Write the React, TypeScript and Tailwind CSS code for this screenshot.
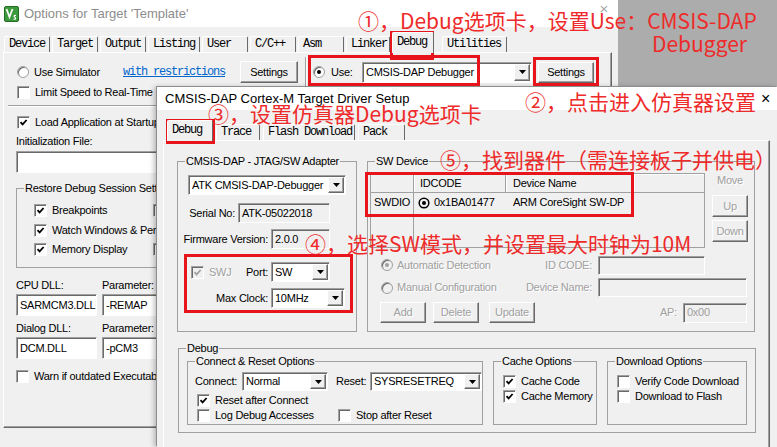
import React from "react";

const sunken =
  "border border-t-[#a0a0a0] border-l-[#a0a0a0] border-r-white border-b-white shadow-[inset_1px_1px_0_#696969]";
const raised =
  "border border-t-white border-l-white border-r-[#696969] border-b-[#696969] shadow-[inset_-1px_-1px_0_#a0a0a0]";
const grayText = "text-[#a0a0a0] [text-shadow:1px_1px_0_#fff]";
const redBox = "border-[3px] border-[#e8141c]";
const ann =
  "font-['Noto_Sans_CJK_SC',sans-serif] text-[21px] leading-[23px] tracking-normal text-[#ee2a2a] whitespace-nowrap";
const mono = "font-['Liberation_Mono',monospace] text-[12px] tracking-[-1.2px]";

function Radio({ on, dis, cls = "" }: { on?: boolean; dis?: boolean; cls?: string }) {
  return (
    <span
      className={`w-[12px] h-[12px] shrink-0 rounded-full border border-[#a0a0a0] shadow-[inset_1px_1px_0_#696969] flex items-center justify-center ${
        dis ? "bg-[#f0f0f0]" : "bg-white"
      } ${cls}`}
    >
      {on && <span className={`w-[4px] h-[4px] rounded-full ${dis ? "bg-[#a0a0a0]" : "bg-black"}`} />}
    </span>
  );
}

function Check({ on, dis, label, cls = "" }: { on?: boolean; dis?: boolean; label?: string; cls?: string }) {
  return (
    <div className={`flex items-center gap-[5px] h-[14px] whitespace-nowrap shrink-0 ${cls}`}>
      <span
        className={`w-[13px] h-[13px] shrink-0 ${sunken} ${dis ? "bg-[#f0f0f0]" : "bg-white"} flex items-center justify-center`}
      >
        {on && (
          <svg width="9" height="9" viewBox="0 0 9 9">
            <path d="M1.5 4.2L3.6 6.4L7.6 2" fill="none" stroke={dis ? "#a0a0a0" : "#000"} strokeWidth="1.8" />
          </svg>
        )}
      </span>
      {label && <span className={dis ? grayText : ""}>{label}</span>}
    </div>
  );
}

function Btn({ label, cls, dis }: { label: string; cls: string; dis?: boolean }) {
  return (
    <div className={`${cls} shrink-0 ${raised} bg-[#f0f0f0] flex items-center justify-center ${dis ? grayText : ""}`}>
      {label}
    </div>
  );
}

function Field({ text = "", cls, gray, dim }: { text?: string; cls: string; gray?: boolean; dim?: boolean }) {
  return (
    <div
      className={`${cls} shrink-0 ${sunken} ${gray ? "bg-[#f0f0f0]" : "bg-white"} flex items-center pl-[3px] whitespace-nowrap overflow-hidden ${
        dim ? "text-[#a0a0a0]" : ""
      }`}
    >
      {text}
    </div>
  );
}

function Combo({ text, cls }: { text: string; cls: string }) {
  return (
    <div className={`${cls} shrink-0 ${sunken} bg-white flex items-stretch`}>
      <span className="flex-1 flex items-center pl-[3px] whitespace-nowrap overflow-hidden">{text}</span>
      <span className={`w-[16px] my-[1px] mr-[1px] bg-[#f0f0f0] ${raised} flex items-center justify-center`}>
        <svg width="7" height="4" viewBox="0 0 7 4">
          <path d="M0 0H7L3.5 4Z" fill="#000" />
        </svg>
      </span>
    </div>
  );
}

function Group({ label, cls, children }: { label: string; cls: string; children?: React.ReactNode }) {
  return (
    <fieldset className={`${cls} shrink-0 border border-[#a0a0a0] min-w-0`}>
      <legend className="ml-[7px] px-[1px] leading-[13px] whitespace-nowrap">{label}</legend>
      <div className="flex flex-col">{children}</div>
    </fieldset>
  );
}

function Tab({ label, w, active, cls = "" }: { label: string; w: string; active?: boolean; cls?: string }) {
  return (
    <div
      className={`${w} ${
        active ? "h-[21px] -mb-[1px] relative z-10 bg-[#f0f0f0] pt-[2px]" : "h-[16px] pt-0"
      } shrink-0 border-t border-l border-r border-t-white border-l-white border-r-[#696969] rounded-t-[2px] pl-[4px] ${mono} leading-[14px] whitespace-nowrap overflow-hidden ${cls}`}
    >
      {label}
    </div>
  );
}

const panel =
  "border border-t-white border-l-white border-r-[#696969] border-b-[#696969] shadow-[inset_-1px_-1px_0_#a0a0a0]";

function KeilIcon() {
  return (
    <svg width="15" height="16" viewBox="0 0 15 16">
      <rect x="0.5" y="0.5" width="14" height="15" rx="1.5" fill="#3c9a3c" stroke="#226b22" />
      <path d="M2.5 3L5.5 11L8.5 3" fill="none" stroke="#fff" strokeWidth="1.7" />
      <path d="M12 9.5C10 9 9.5 10.5 10.8 11.2C12.2 12 11.8 13.6 9.6 13.2" fill="none" stroke="#fff" strokeWidth="1.2" />
    </svg>
  );
}

function OptionsWindow() {
  return (
    <div className="absolute left-0 top-0 w-[618px] h-[447px] bg-[#f0f0f0] flex flex-col">
      <div className="h-[27px] shrink-0 bg-white flex items-center pl-[4px]">
        <KeilIcon />
        <span className="ml-[5px] text-[13px] tracking-normal text-[#8d8d8d]">Options for Target 'Template'</span>
        <span className="ml-auto mr-[10px] self-start mt-[1px] text-[15px] leading-[16px] text-[#a8a8a8]">×</span>
      </div>
      <div className="mt-[3px] h-[22px] shrink-0 flex items-end pl-[4px] gap-[2px]">
        <Tab label="Device" w="w-[46px]" />
        <Tab label="Target" w="w-[46px]" />
        <Tab label="Output" w="w-[46px]" />
        <Tab label="Listing" w="w-[52px]" />
        <Tab label="User" w="w-[46px]" />
        <Tab label="C/C++" w="w-[46px]" />
        <Tab label="Asm" w="w-[46px]" />
        <Tab label="Linker" w="w-[44px]" />
        <Tab label="Debug" w="w-[42px]" active />
        <Tab label="Utilities" w="w-[65px]" cls="ml-[6px]" />
      </div>
      <div className={`ml-[3px] w-[609px] h-[376px] shrink-0 ${panel} flex flex-col`}>
        <div className="mt-[6px] h-[26px] flex items-center">
          <div className="ml-[13px] w-[106px] flex items-center gap-[5px]">
            <Radio />
            <span>Use Simulator</span>
          </div>
          <span className={`w-[117px] ${mono} text-[#0066cc] underline`}>with restrictions</span>
          <Btn label="Settings" cls="w-[58px] h-[22px]" />
          <div className="ml-[7px] w-[2px] h-[30px] border-l border-r border-l-[#a0a0a0] border-r-white" />
          <div className="ml-[6px] w-[49px] flex items-center gap-[6px]">
            <Radio on />
            <span>Use:</span>
          </div>
          <Combo text="CMSIS-DAP Debugger" cls="w-[170px] h-[21px]" />
          <Btn label="Settings" cls="ml-[6px] w-[56px] h-[21px]" />
        </div>
        <Check label="Limit Speed to Real-Time" cls="ml-[13px]" />
        <div className="mt-[6px] mx-[4px] h-[2px] border-t border-b border-t-[#a0a0a0] border-b-white" />
        <Check on label="Load Application at Startup" cls="mt-[8px] ml-[13px]" />
        <div className="mt-[5px] ml-[12px] h-[14px] flex items-center">Initialization File:</div>
        <Field cls="mt-[3px] ml-[12px] w-[300px] h-[22px]" />
        <Group label="Restore Debug Session Settings" cls="mt-[9px] ml-[12px] w-[300px] h-[86px]">
          <div className="mt-[8px] ml-[17px] flex">
            <Check on label="Breakpoints" cls="w-[119px]" />
            <Check on label="Toolbox" />
          </div>
          <div className="mt-[6px] ml-[17px] flex">
            <Check on label="Watch Windows & Performance Analyzer" />
          </div>
          <div className="mt-[5px] ml-[17px] flex">
            <Check on label="Memory Display" cls="w-[119px]" />
            <Check on label="System Viewer" />
          </div>
        </Group>
        <div className="mt-[10px] ml-[12px] h-[14px] flex items-center">
          <span className="w-[86px]">CPU DLL:</span>
          <span>Parameter:</span>
        </div>
        <div className="mt-[2px] ml-[12px] flex gap-[5px]">
          <Field text="SARMCM3.DLL" cls="w-[81px] h-[22px]" />
          <Field text="-REMAP" cls="w-[120px] h-[22px]" />
        </div>
        <div className="mt-[5px] ml-[12px] h-[14px] flex items-center">
          <span className="w-[86px]">Dialog DLL:</span>
          <span>Parameter:</span>
        </div>
        <div className="mt-[2px] ml-[12px] flex gap-[5px]">
          <Field text="DCM.DLL" cls="w-[81px] h-[22px]" />
          <Field text="-pCM3" cls="w-[120px] h-[22px]" />
        </div>
        <Check label="Warn if outdated Executable is loaded" cls="mt-[10px] ml-[12px]" />
      </div>
    </div>
  );
}

function DeviceTable() {
  const line = "border-[#a0a0a0]";
  return (
    <div className={`ml-[2px] w-[335px] h-[75px] border ${line} flex flex-col shrink-0`}>
      <div className={`flex h-[19px] border-b ${line}`}>
        <div className={`w-[43px] border-r ${line}`} />
        <div className={`w-[92px] border-r ${line} pl-[6px] flex items-center shadow-[inset_1px_1px_0_#fff]`}>IDCODE</div>
        <div className={`w-[128px] border-r ${line} pl-[7px] flex items-center shadow-[inset_1px_1px_0_#fff]`}>
          Device Name
        </div>
        <div className="flex-1 shadow-[inset_1px_1px_0_#fff]" />
      </div>
      <div className="flex h-[19px]">
        <div className={`w-[43px] border-r ${line} flex items-center justify-center`}>SWDIO</div>
        <div className="w-[92px] pl-[4px] flex items-center gap-[4px]">
          <svg width="12" height="12" viewBox="0 0 12 12">
            <circle cx="6" cy="6" r="4.8" fill="none" stroke="#000" strokeWidth="1.5" />
            <circle cx="6" cy="6" r="2" fill="#000" />
          </svg>
          <span>0x1BA01477</span>
        </div>
        <div className="w-[128px] pl-[7px] flex items-center whitespace-nowrap">ARM CoreSight SW-DP</div>
      </div>
      <div className="flex-1 flex">
        <div className={`w-[43px] border-r ${line}`} />
      </div>
    </div>
  );
}

function DriverWindow() {
  return (
    <div className="absolute left-[157px] top-[87px] w-[620px] h-[360px] bg-[#f0f0f0] shadow-[-1px_-1px_0_#8e8e8e,-3px_0_5px_rgba(0,0,0,0.25)] flex flex-col">
      <div className="h-[23px] shrink-0 bg-white flex items-center pl-[8px]">
        <span className="text-[13px] tracking-normal">CMSIS-DAP Cortex-M Target Driver Setup</span>
        <span className="ml-auto mr-[7px] text-[16px] leading-[16px]">×</span>
      </div>
      <div className="mt-[10px] h-[20px] shrink-0 flex items-end pl-[10px] gap-[3px]">
        <Tab label="Debug" w="w-[46px]" active />
        <Tab label="Trace" w="w-[44px]" />
        <Tab label="Flash Download" w="w-[92px]" />
        <Tab label="Pack" w="w-[47px]" />
      </div>
      <div className={`ml-[6px] w-[607px] h-[320px] shrink-0 ${panel} flex flex-col`}>
        <div className="mt-[14px] ml-[13px] flex gap-[10px]">
          <Group label="CMSIS-DAP - JTAG/SW Adapter" cls="w-[180px] h-[177px]">
            <Combo text="ATK CMSIS-DAP-Debugger" cls="mt-[7px] ml-[10px] w-[158px] h-[20px]" />
            <div className="mt-[8px] h-[20px] flex items-center">
              <span className="w-[60px] text-right pr-[3px]">Serial No:</span>
              <Field gray text="ATK-05022018" cls="w-[92px] h-[20px]" />
            </div>
            <div className="mt-[6px] h-[20px] flex items-center">
              <span className="w-[93px] text-right pr-[3px] whitespace-nowrap">Firmware Version:</span>
              <Field gray text="2.0.0" cls="w-[59px] h-[20px]" />
            </div>
            <div className="mt-[13px] h-[20px] flex items-center">
              <div className="w-[93px] flex items-center">
                <Check on dis label="SWJ" cls="ml-[13px]" />
                <span className="ml-auto pr-[3px]">Port:</span>
              </div>
              <Combo text="SW" cls="w-[59px] h-[20px]" />
            </div>
            <div className="mt-[6px] h-[20px] flex items-center">
              <span className="w-[93px] text-right pr-[3px]">Max Clock:</span>
              <Combo text="10MHz" cls="w-[74px] h-[20px]" />
            </div>
          </Group>
          <Group label="SW Device" cls="w-[388px] h-[177px]">
            <div className="mt-[5px] flex">
              <DeviceTable />
              <div className="ml-[7px] w-[36px] flex flex-col">
                <span className={`mt-[1px] h-[14px] text-center ${grayText}`}>Move</span>
                <Btn dis label="Up" cls="mt-[7px] w-[36px] h-[22px]" />
                <Btn dis label="Down" cls="mt-[3px] w-[36px] h-[22px]" />
              </div>
            </div>
            <div className="mt-[7px] h-[20px] flex items-center">
              <div className="w-[230px] flex items-center">
                <Radio on dis cls="ml-[13px]" />
                <span className={`ml-[4px] ${grayText}`}>Automatic Detection</span>
                <span className={`ml-auto mr-[6px] ${grayText}`}>ID CODE:</span>
              </div>
              <Field gray cls="w-[107px] h-[19px]" />
            </div>
            <div className="mt-[3px] h-[19px] flex items-center">
              <div className="w-[230px] flex items-center">
                <Radio dis cls="ml-[13px]" />
                <span className={`ml-[4px] ${grayText}`}>Manual Configuration</span>
                <span className={`ml-auto mr-[6px] ${grayText}`}>Device Name:</span>
              </div>
              <Field gray cls="w-[149px] h-[19px]" />
            </div>
            <div className="mt-[5px] h-[21px] flex items-center">
              <Btn dis label="Add" cls="ml-[12px] w-[46px] h-[21px]" />
              <Btn dis label="Delete" cls="ml-[7px] w-[46px] h-[21px]" />
              <Btn dis label="Update" cls="ml-[10px] w-[46px] h-[21px]" />
              <span className={`ml-auto mr-[6px] ${grayText}`}>AP:</span>
              <Field gray dim text="0x00" cls="mr-[7px] w-[64px] h-[20px]" />
            </div>
          </Group>
        </div>
        <Group label="Debug" cls="mt-[10px] ml-[14px] w-[578px] h-[91px]">
          <div className="ml-[8px] flex gap-[10px]">
            <Group label="Connect & Reset Options" cls="w-[296px] h-[70px]">
              <div className="mt-[4px] h-[19px] flex items-center">
                <span className="ml-[7px] w-[47px]">Connect:</span>
                <Combo text="Normal" cls="w-[86px] h-[19px]" />
                <span className="ml-[8px] w-[34px]">Reset:</span>
                <Combo text="SYSRESETREQ" cls="w-[112px] h-[19px]" />
              </div>
              <Check on label="Reset after Connect" cls="mt-[2px] ml-[9px]" />
              <div className="mt-[1px] ml-[9px] flex">
                <Check label="Log Debug Accesses" cls="w-[141px]" />
                <Check label="Stop after Reset" />
              </div>
            </Group>
            <Group label="Cache Options" cls="w-[104px] h-[70px]">
              <Check on label="Cache Code" cls="mt-[6px] ml-[9px]" />
              <Check on label="Cache Memory" cls="mt-[1px] ml-[9px]" />
            </Group>
            <Group label="Download Options" cls="w-[140px] h-[70px]">
              <Check label="Verify Code Download" cls="mt-[6px] ml-[9px]" />
              <Check label="Download to Flash" cls="mt-[1px] ml-[9px]" />
            </Group>
          </div>
        </Group>
      </div>
    </div>
  );
}

export default function App() {
  return (
    <div className="relative w-[777px] h-[447px] overflow-hidden bg-[#acacac] font-['Liberation_Sans',Arial,sans-serif] text-[11px] leading-[13px] tracking-[-0.25px] text-black">
      <OptionsWindow />
      <DriverWindow />

      {/* red marks */}
      <div className={`absolute left-[390px] top-[31px] w-[44px] h-[29px] ${redBox}`} />
      <div className={`absolute left-[308px] top-[55px] w-[172px] h-[31px] ${redBox}`} />
      <div className={`absolute left-[533px] top-[57px] w-[66px] h-[29px] ${redBox}`} />
      <div className={`absolute left-[166px] top-[119px] w-[49px] h-[25px] ${redBox}`} />
      <div className={`absolute left-[184px] top-[254px] w-[169px] h-[59px] ${redBox}`} />
      <div className={`absolute left-[365px] top-[172px] w-[269px] h-[45px] ${redBox}`} />

      {/* notes */}
      <div className={`absolute left-[358px] top-[9px] ${ann}`}>①，Debug选项卡，设置Use：CMSIS-DAP</div>
      <div className={`absolute left-[652px] top-[32px] ${ann}`}>Debugger</div>
      <div className={`absolute left-[525px] top-[90px] ${ann}`}>②，点击进入仿真器设置</div>
      <div className={`absolute left-[208px] top-[102px] ${ann}`}>③，设置仿真器Debug选项卡</div>
      <div className={`absolute left-[440px] top-[148px] ${ann}`}>⑤，找到器件（需连接板子并供电）</div>
      <div className={`absolute left-[305px] top-[232px] ${ann}`}>④，选择SW模式，并设置最大时钟为10M</div>
    </div>
  );
}
